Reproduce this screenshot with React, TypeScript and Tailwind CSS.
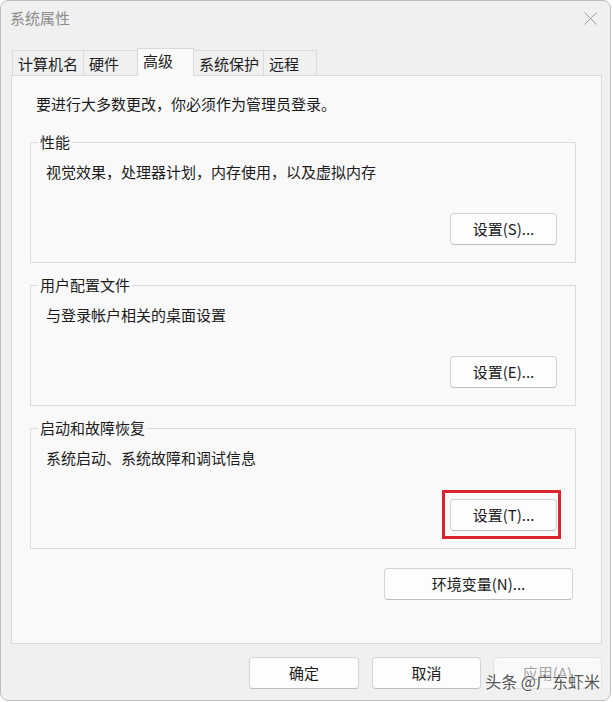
import type { ReactNode } from "react";

const Btn = ({ children, className = "" }: { children: ReactNode; className?: string }) => (
  <button
    className={`h-[32px] rounded-[4px] border border-[#d3d3d3] border-b-[#bdbdbd] bg-[#fdfdfd] text-[15px] leading-[20px] text-[#1b1b1b] ${className}`}
  >
    {children}
  </button>
);

const Group = ({ title, text, children }: { title: string; text: string; children: ReactNode }) => (
  <fieldset className="w-[546px] min-w-0 border border-[#dcdcdc]">
    <legend className="ml-[7px] px-[2px] text-[15px] leading-[16px] text-[#1b1b1b]">{title}</legend>
    <div className="pl-[15px] pr-[18px] pt-[12px] pb-[17px]">
      <p className="text-[15px] leading-[20px] text-[#1b1b1b]">{text}</p>
      <div className="mt-[31px] flex justify-end">{children}</div>
    </div>
  </fieldset>
);

const tabs = [
  { label: "计算机名", w: "w-[72px]" },
  { label: "硬件", w: "w-[55px]" },
  { label: "高级", w: "w-[57px]", active: true },
  { label: "系统保护", w: "w-[71px]" },
  { label: "远程", w: "w-[54px]" },
];

export default function App() {
  return (
    <div className="h-[702px] w-[613px] bg-white font-['Noto_Sans_CJK_SC','Noto_Sans',sans-serif]">
      <div className="flex h-[701px] w-[611px] flex-col rounded-[8px] border border-[#bdbdbd] bg-[#f0f0f0]">
        {/* title bar */}
        <div className="flex h-[34px] items-center justify-between pl-[9px] pr-[13px]">
          <span className="text-[15px] leading-[20px] text-[#8c8c8c]">系统属性</span>
          <svg width="13" height="13" viewBox="0 0 13 13">
            <path d="M0.5 0.5L12.5 12.5M12.5 0.5L0.5 12.5" stroke="#9a9a9a" strokeWidth="1" />
          </svg>
        </div>

        {/* tabs */}
        <div className="mt-[13px] flex h-[27px] items-end pl-[11px]">
          {tabs.map((t, i) =>
            t.active ? (
              <div
                key={t.label}
                className={`relative z-10 -mb-px flex h-[28px] items-center border border-b-0 border-[#d9d9d9] bg-[#f9f9f9] pb-[3px] pl-[5px] text-[15px] leading-[20px] text-[#1b1b1b] ${t.w} ${i ? "-ml-px" : ""}`}
              >
                {t.label}
              </div>
            ) : (
              <div
                key={t.label}
                className={`flex h-[25px] items-center border border-b-0 border-[#dadada] bg-[#f0f0f0] pt-[2px] pl-[5px] text-[15px] leading-[20px] text-[#1b1b1b] ${t.w} ${i ? "-ml-px" : ""}`}
              >
                {t.label}
              </div>
            )
          )}
        </div>

        {/* panel */}
        <div className="ml-[10px] h-[569px] w-[591px] border border-[#d9d9d9] bg-[#f9f9f9] pl-[18px] pt-[18px]">
          <p className="pl-[6px] text-[15px] leading-[20px] text-[#1b1b1b]">要进行大多数更改，你必须作为管理员登录。</p>
          <div className="mt-[20px] flex w-[546px] flex-col gap-[14px]">
            <Group title="性能" text="视觉效果，处理器计划，内存使用，以及虚拟内存">
              <Btn className="w-[107px]">设置(S)...</Btn>
            </Group>
            <Group title="用户配置文件" text="与登录帐户相关的桌面设置">
              <Btn className="w-[107px]">设置(E)...</Btn>
            </Group>
            <Group title="启动和故障恢复" text="系统启动、系统故障和调试信息">
              <div className="relative">
                <Btn className="w-[107px]">设置(T)...</Btn>
                <span className="pointer-events-none absolute -top-[9px] -right-[4px] -bottom-[8px] -left-[8px] border-[3px] border-[#d9262e]" />
              </div>
            </Group>
          </div>
          <div className="mt-[19px] flex w-[546px] justify-end pr-[3px]">
            <Btn className="w-[189px]">环境变量(N)...</Btn>
          </div>
        </div>

        {/* footer buttons */}
        <div className="relative mt-[13px] flex justify-end pr-[8px]">
          <Btn className="w-[110px]">确定</Btn>
          <Btn className="ml-[13px] w-[109px]">取消</Btn>
          <button className="ml-[12px] h-[32px] w-[109px] rounded-[4px] border border-[#e2e2e2] bg-[#f9f9f9] text-[15px] leading-[20px] text-[#a3a3a3]">
            应用(A)
          </button>
          <span className="pointer-events-none absolute top-[13px] right-[10px] text-[16px] leading-[22px] text-[#555555] [text-shadow:0_0_2px_#ffffff,0_0_2px_#ffffff]">
            头条 @广东虾米
          </span>
        </div>
      </div>
    </div>
  );
}
